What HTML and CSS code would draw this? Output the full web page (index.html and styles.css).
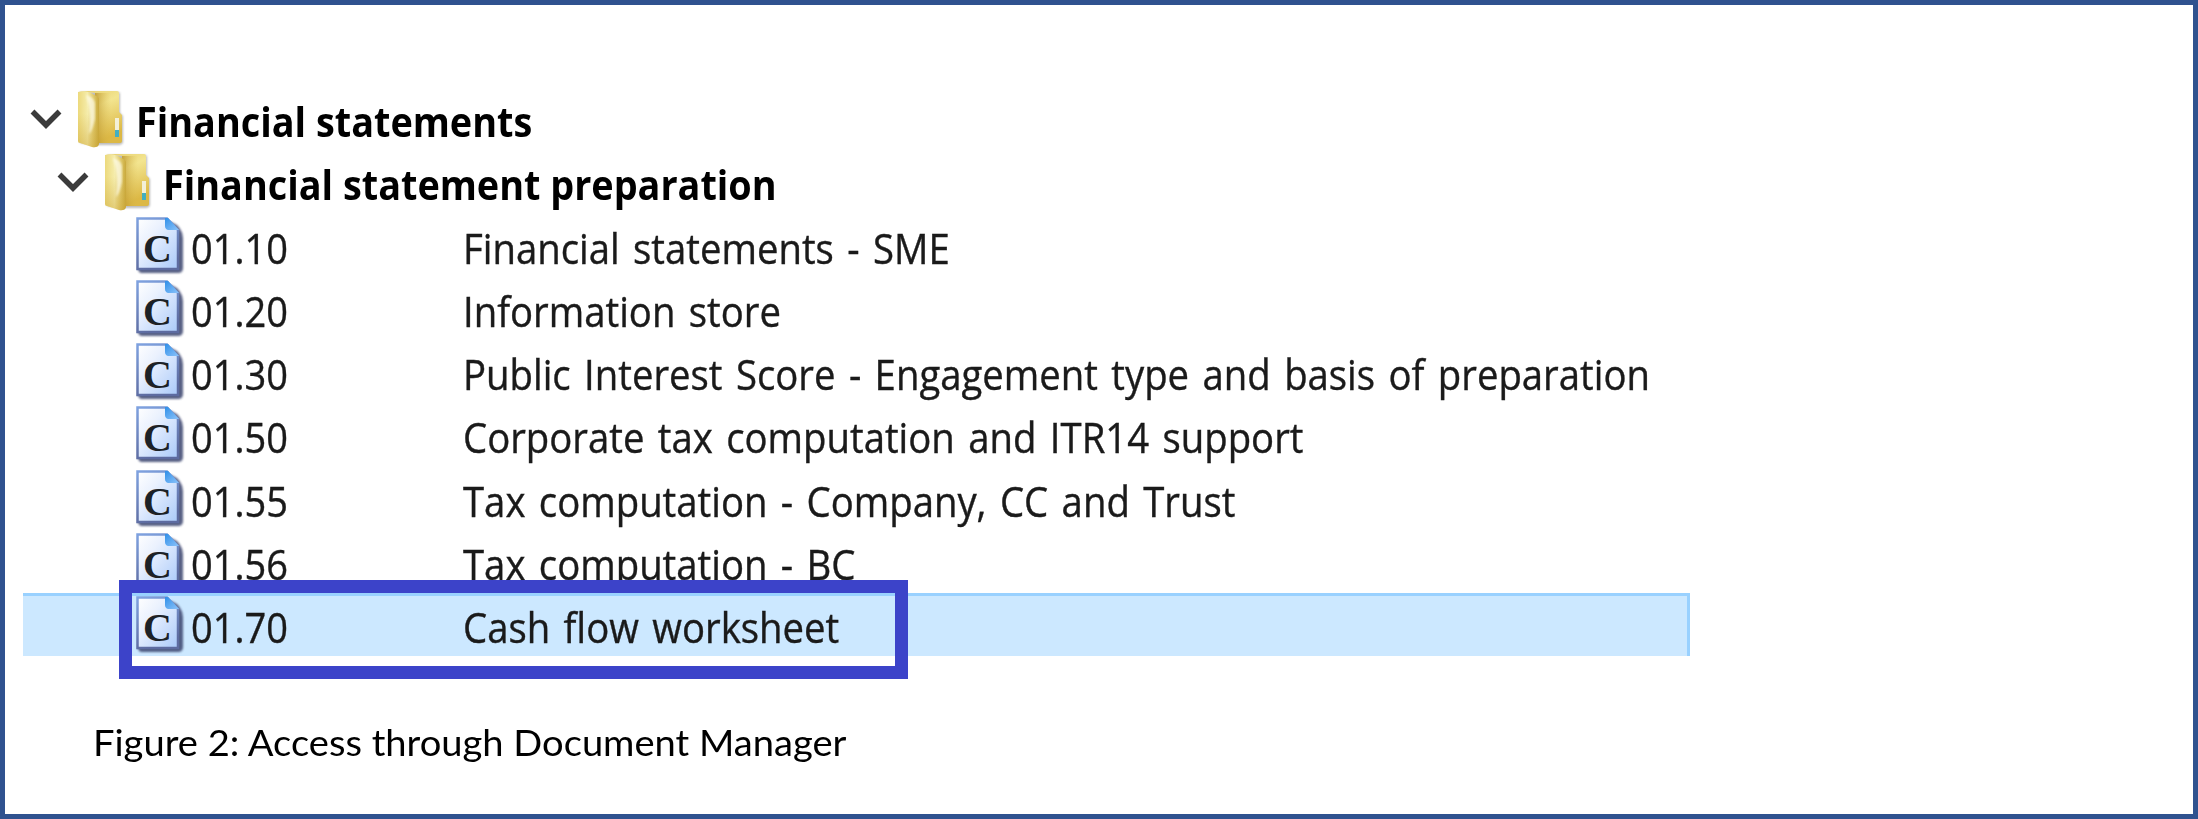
FILE: index.html
```
<!DOCTYPE html>
<html lang="en">
<head>
    <meta charset="UTF-8">
    <meta name="viewport" content="width=device-width, initial-scale=1.0">
    <title>Document Manager</title>
    <link rel="stylesheet" href="styles.css">
</head>
<body>

    <!-- Shared icons -->
    <svg class="icon-defs" width="0" height="0">
        <defs>
            <linearGradient id="folder-front" x1="0" x2="1">
                <stop offset="0" stop-color="#ecd97c"/>
                <stop offset="0.45" stop-color="#f5ecaa"/>
                <stop offset="0.7" stop-color="#e3ce72"/>
                <stop offset="1" stop-color="#c9a93c"/>
            </linearGradient>
            <linearGradient id="folder-back" x1="0" y1="0" x2="0.4" y2="1">
                <stop offset="0" stop-color="#e6ce6c"/>
                <stop offset="0.4" stop-color="#f3e590"/>
                <stop offset="1" stop-color="#dcb845"/>
            </linearGradient>
            <linearGradient id="folder-shade" x1="0" x2="1">
                <stop offset="0" stop-color="#b48c24" stop-opacity="0.7"/>
                <stop offset="1" stop-color="#d9b94c" stop-opacity="0"/>
            </linearGradient>
            <linearGradient id="folder-low" x1="0" y1="0" x2="0" y2="1">
                <stop offset="0.4" stop-color="#c79d2b" stop-opacity="0"/>
                <stop offset="1" stop-color="#c79d2b" stop-opacity="0.4"/>
            </linearGradient>
            <linearGradient id="doc-paper" x1="0" y1="0" x2="1" y2="1">
                <stop offset="0" stop-color="#ffffff"/>
                <stop offset="0.35" stop-color="#eaf1fe"/>
                <stop offset="1" stop-color="#a9c9f9"/>
            </linearGradient>
            <linearGradient id="doc-edge" x1="0" y1="0" x2="0.3" y2="1">
                <stop offset="0" stop-color="#7fa2e0"/>
                <stop offset="1" stop-color="#5d6ba0"/>
            </linearGradient>
            <linearGradient id="doc-fold" x1="0" y1="0" x2="1" y2="1">
                <stop offset="0" stop-color="#2f8fe8"/>
                <stop offset="1" stop-color="#8cc3fa"/>
            </linearGradient>
            <filter id="soft" x="-10%" y="-10%" width="120%" height="120%">
                <feGaussianBlur stdDeviation="1"/>
            </filter>
        </defs>
        <symbol id="chevron" viewBox="0 0 32 22">
            <path d="M2.5 3.5L16 17L29.5 3.5" fill="none" stroke="#3b3b3b" stroke-width="5.5"/>
        </symbol>
        <symbol id="folder" viewBox="0 0 48 58">
            <path d="M3 2H41Q43 2 43 4V23L46 26V53L43 55H20L3 53Z" fill="#777" opacity="0.5" filter="url(#soft)"/>
            <path d="M2 1H40Q42 1 42 3V22L45 25V51Q45 53 43 53H18V3Z" fill="url(#folder-back)"/>
            <path d="M18 3H34V53H18Z" fill="url(#folder-shade)"/>
            <path d="M1 2Q8 0 14 3L21 7Q22 8 22 10V54Q21 58 15 57L3 53Q1 53 1 51Z" fill="url(#folder-front)"/>
            <path d="M1 2Q8 0 14 3L21 7Q22 8 22 10V54Q21 58 15 57L3 53Q1 53 1 51Z" fill="url(#folder-low)"/>
            <path d="M9 5Q17 7 18 13V29Q15 42 12 44Q15 24 9 5Z" fill="#fffef0" opacity="0.7" filter="url(#soft)"/>
            <rect x="38" y="28" width="4" height="12" fill="#f3f0d8"/>
            <rect x="38" y="40" width="4" height="7" fill="#43afc0"/>
        </symbol>
        <symbol id="doc" viewBox="0 0 50 58">
            <path d="M4 5H35Q46 9 47 21V51Q47 56 42 56H6Q2 56 2 51Z" fill="#3b456e" opacity="0.85" filter="url(#soft)"/>
            <path d="M1.5 1.5H31L42 13V52H1.5Z" fill="url(#doc-paper)" stroke="url(#doc-edge)" stroke-width="2.5"/>
            <path d="M29 1H32L43 13H32Q29 12 29 9Z" fill="url(#doc-fold)"/>
        </symbol>
    </svg>

    <div class="figure">
        <div class="tree">
            <div class="row folder-row">
                <svg class="chevron"><use href="#chevron"/></svg>
                <svg class="folder"><use href="#folder"/></svg>
                <span class="folder-name">Financial statements</span>
            </div>
            <div class="row folder-row nested">
                <svg class="chevron"><use href="#chevron"/></svg>
                <svg class="folder"><use href="#folder"/></svg>
                <span class="folder-name">Financial statement preparation</span>
            </div>
            <div class="row doc-row">
                <svg class="doc"><use href="#doc"/><text x="7" y="45">C</text></svg>
                <span class="code">01.10</span>
                <span class="name">Financial statements - SME</span>
            </div>
            <div class="row doc-row">
                <svg class="doc"><use href="#doc"/><text x="7" y="45">C</text></svg>
                <span class="code">01.20</span>
                <span class="name">Information store</span>
            </div>
            <div class="row doc-row">
                <svg class="doc"><use href="#doc"/><text x="7" y="45">C</text></svg>
                <span class="code">01.30</span>
                <span class="name">Public Interest Score - Engagement type and basis of preparation</span>
            </div>
            <div class="row doc-row">
                <svg class="doc"><use href="#doc"/><text x="7" y="45">C</text></svg>
                <span class="code">01.50</span>
                <span class="name">Corporate tax computation and ITR14 support</span>
            </div>
            <div class="row doc-row">
                <svg class="doc"><use href="#doc"/><text x="7" y="45">C</text></svg>
                <span class="code">01.55</span>
                <span class="name">Tax computation - Company, CC and Trust</span>
            </div>
            <div class="row doc-row">
                <svg class="doc"><use href="#doc"/><text x="7" y="45">C</text></svg>
                <span class="code">01.56</span>
                <span class="name">Tax computation - BC</span>
            </div>
            <div class="row doc-row selected">
                <svg class="doc"><use href="#doc"/><text x="7" y="45">C</text></svg>
                <span class="code">01.70</span>
                <span class="name">Cash flow worksheet</span>
                <div class="callout"></div>
            </div>
        </div>
        <p class="caption">Figure 2: Access through Document Manager</p>
    </div>

</body>
</html>
```

FILE: styles.css
```
* {
    box-sizing: border-box;
}

body {
    margin: 0;
    background-color: #fff;
    color: #000;
    font-family: "Open Sans", "Noto Sans", sans-serif;
}

.icon-defs {
    position: absolute;
}

.figure {
    height: 819px;
    border: 5px solid #2f528f;
    padding: 82px 0 0 18px;
    overflow: hidden;
}

.tree {
    width: 1667px;
}

.row {
    display: flex;
    align-items: flex-start;
    height: 63.25px;
    font-size: 42px;
    line-height: 68px;
    white-space: nowrap;
}

.row > * {
    flex-shrink: 0;
}

.folder-row {
    padding-left: 7px;
}

.folder-row.nested {
    padding-left: 34px;
}

.chevron {
    width: 32px;
    height: 22px;
    margin-top: 21px;
}

.folder {
    width: 48px;
    height: 58px;
    margin: 3px 0 0 15px;
}

.folder-name {
    margin-left: 11px;
    font-weight: 700;
    transform: scaleX(0.9);
    transform-origin: left;
}

.doc-row {
    padding-left: 113px;
    color: #1a1a1a;
}

.doc {
    width: 50px;
    height: 58px;
    margin-top: 3px;
}

.doc text {
    font-family: "Liberation Serif", serif;
    font-weight: 700;
    font-size: 40px;
    fill: #1c2126;
}

.code {
    width: 273px;
    margin-left: 5px;
    transform: scaleX(0.905);
    transform-origin: left;
    -webkit-text-stroke: 0.4px #1a1a1a;
}

.name {
    margin-left: -1px;
    word-spacing: 3.8px;
    transform: scaleX(0.912);
    transform-origin: left;
    -webkit-text-stroke: 0.4px #1a1a1a;
}

.selected {
    position: relative;
    background-color: #cce8ff;
    border-top: 3px solid #99d1ff;
    border-right: 3px solid #99d1ff;
}

.selected .doc {
    margin-top: 0;
}

.selected .code,
.selected .name {
    margin-top: -3px;
}

/* Marker drawn over the selected document */
.callout {
    position: absolute;
    left: 96px;
    top: -16px;
    width: 789px;
    height: 99px;
    border: 13px solid #3c43c9;
}

.caption {
    margin: 64px 0 0 70px;
    font-family: Lato, sans-serif;
    font-size: 37px;
    line-height: 44px;
    white-space: nowrap;
    transform: scaleX(1.03);
    transform-origin: left;
}
```
